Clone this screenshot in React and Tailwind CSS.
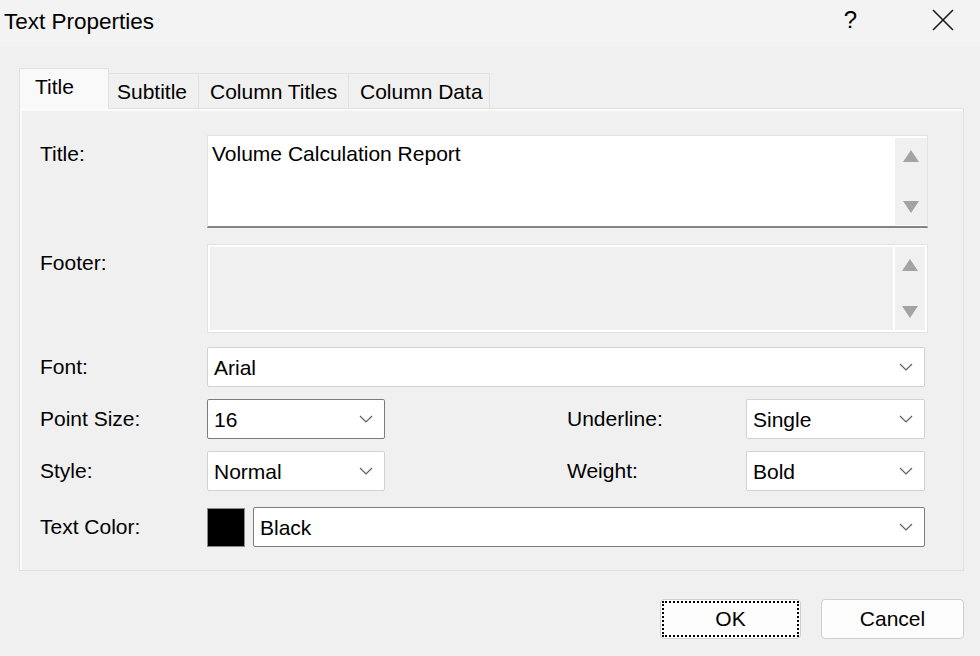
import React from "react";

const font = { fontFamily: '"Liberation Sans", Arial, sans-serif' };

function Chevron() {
    return (
        <svg width="14" height="8" viewBox="0 0 14 8" className="shrink-0">
            <path d="M1 1 L7 7 L13 1" fill="none" stroke="#5f5f5f" strokeWidth="1.2" />
        </svg>
    );
}

function Select({ value, width, dark = false }) {
    return (
        <div
            className={`h-[40px] flex items-center justify-between pl-[6px] pr-[11px] bg-white rounded-[2px] border ${dark ? "border-[#7c7c7c]" : "border-[#d2d2d2]"} ${width}`}
        >
            <span className="text-[21px] leading-none text-black">{value}</span>
            <Chevron />
        </div>
    );
}

function ScrollArrows({ separator = false }) {
    return (
        <div className={`w-[32px] h-full flex flex-col items-center justify-between py-[12px] bg-[#f0f0f0] ${separator ? "border-l-2 border-white" : ""}`}>
            <svg width="16" height="12" viewBox="0 0 16 12">
                <path d="M8 0 L16 12 L0 12 Z" fill="#a3a3a3" />
            </svg>
            <svg width="16" height="12" viewBox="0 0 16 12">
                <path d="M0 0 L16 0 L8 12 Z" fill="#a3a3a3" />
            </svg>
        </div>
    );
}

function Label({ children, top = false }) {
    return (
        <div className={`w-[167px] shrink-0 text-[21px] leading-[24px] text-black ${top ? "pt-[7px] self-start" : ""}`}>
            {children}
        </div>
    );
}

export default function App() {
    return (
        <div className="w-[980px] h-[656px] bg-[#f0f0f0] overflow-hidden" style={font}>
            {/* TITLE BAR */}
            <div className="h-[46px] bg-[#f3f3f3] flex items-center pl-[4px] pr-[26px]">
                <span className="text-[22.5px] text-black leading-none -mt-[2px]">Text Properties</span>
                <span className="ml-auto text-[24px] leading-none text-black -mt-[6px]">?</span>
                <svg width="22" height="22" viewBox="0 0 22 22" className="ml-[75px] -mt-[6px]">
                    <path d="M1 1 L21 21 M21 1 L1 21" stroke="#1a1a1a" strokeWidth="1.6" />
                </svg>
            </div>

            <div className="pl-[19px] pr-[16px] pt-[23px]">
                {/* TABS */}
                <div className="flex items-end h-[40px] relative z-10 -mb-px">
                    <div className="w-[90px] h-[41px] bg-[#f9f9f9] border border-b-0 border-[#e1e1e1] pl-[15px] pt-[6px] text-[21px] leading-[24px] text-black">
                        Title
                    </div>
                    <div className="w-[90px] h-[36px] pl-[8px] border border-l-0 border-b-0 border-[#e1e1e1] flex items-center text-[21px] text-black">
                        Subtitle
                    </div>
                    <div className="w-[150px] h-[36px] pl-[11px] border border-l-0 border-b-0 border-[#e1e1e1] flex items-center text-[21px] text-black">
                        Column Titles
                    </div>
                    <div className="w-[141px] h-[36px] pl-[11px] border border-l-0 border-b-0 border-[#e1e1e1] flex items-center text-[21px] text-black">
                        Column Data
                    </div>
                </div>

                {/* PANEL */}
                <div className="h-[463px] border border-[#e1e1e1] shadow-[inset_2px_2px_0_#fbfbfb] pl-[20px] pt-[26px] flex flex-col">
                    <div className="flex items-start">
                        <Label top>Title:</Label>
                        <div className="w-[721px] h-[93px] bg-white border border-[#e3e3e3] border-b-2 border-b-[#838383] flex pt-[2px] pb-[1px]">
                            <div className="flex-1 pl-[4px] pt-[4px] text-[21px] leading-[24px] text-black">Volume Calculation Report</div>
                            <ScrollArrows />
                        </div>
                    </div>

                    <div className="flex items-start mt-[16px]">
                        <Label top>Footer:</Label>
                        <div className="w-[721px] h-[89px] bg-[#f0f0f0] border border-[#e3e3e3] shadow-[inset_2px_2px_0_#fff,inset_-2px_-2px_0_#fff] flex py-[2px] pr-[2px]">
                            <div className="flex-1" />
                            <ScrollArrows separator />
                        </div>
                    </div>

                    <div className="flex items-center mt-[14px]">
                        <Label>Font:</Label>
                        <Select value="Arial" width="w-[718px]" />
                    </div>

                    <div className="flex items-center mt-[12px]">
                        <Label>Point Size:</Label>
                        <Select value="16" width="w-[178px]" dark />
                        <div className="ml-[182px] w-[179px] text-[21px] text-black">Underline:</div>
                        <Select value="Single" width="w-[179px]" />
                    </div>

                    <div className="flex items-center mt-[12px]">
                        <Label>Style:</Label>
                        <Select value="Normal" width="w-[178px]" />
                        <div className="ml-[182px] w-[179px] text-[21px] text-black">Weight:</div>
                        <Select value="Bold" width="w-[179px]" />
                    </div>

                    <div className="flex items-center mt-[16px]">
                        <Label>Text Color:</Label>
                        <div className="w-[38px] h-[39px] bg-black border border-[#8a8a8a]" />
                        <div className="ml-[8px]">
                            <Select value="Black" width="w-[672px]" dark />
                        </div>
                    </div>
                </div>

                {/* BUTTONS */}
                <div className="flex justify-end gap-[20px] mt-[28px]">
                    <div className="w-[141px] h-[40px] rounded-[4px] border border-[#cfcfcf] bg-[#fdfdfd] p-px">
                        <div className="w-full h-full border-2 border-dotted border-black flex items-center justify-center text-[21px] text-black">
                            OK
                        </div>
                    </div>
                    <div className="w-[143px] h-[40px] rounded-[4px] border border-[#cfcfcf] bg-[#fdfdfd] flex items-center justify-center text-[21px] text-black">
                        Cancel
                    </div>
                </div>
            </div>
        </div>
    );
}
